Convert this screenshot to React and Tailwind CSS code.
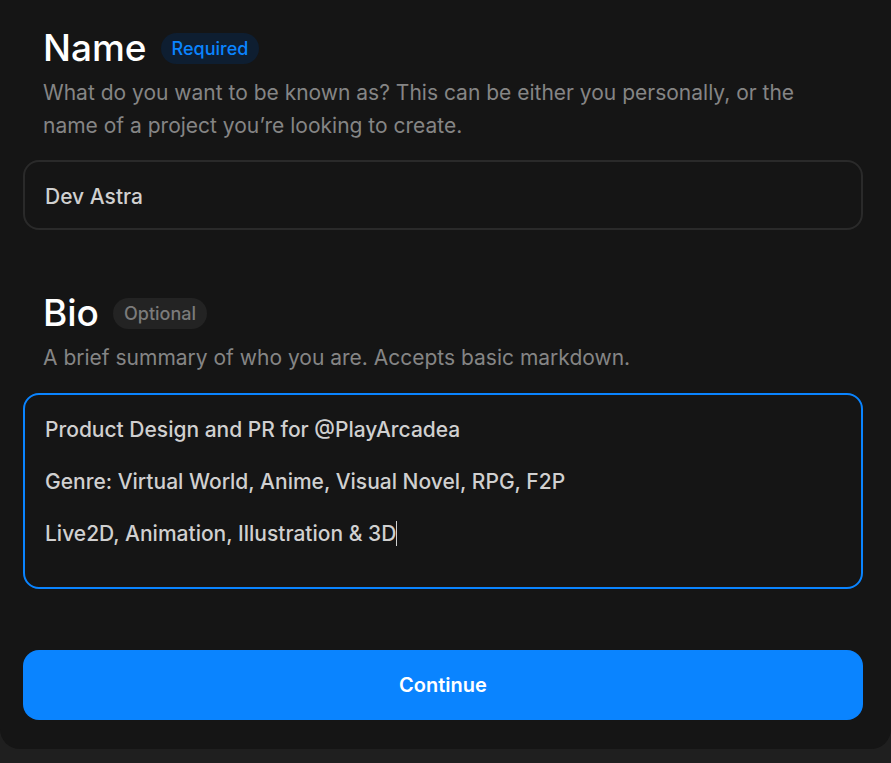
const Badge = ({ children, tone }) => (
  <span
    className={
      tone === 'blue'
        ? 'inline-flex h-[31px] items-center rounded-full bg-[#0e1e31] px-[11px] text-[18px] font-medium text-[#0a84ff]'
        : 'inline-flex h-[31px] items-center rounded-full bg-[#232323] px-[11px] text-[18px] font-medium text-[#7b7b7b]'
    }
  >
    {children}
  </span>
)

const FieldHeader = ({ title, badge, tone, children }) => (
  <div className="px-[20px]">
    <div className="flex h-[48px] items-center gap-[14px]">
      <h2 className="text-[37px] font-medium leading-[48px] text-white">{title}</h2>
      <Badge tone={tone}>{badge}</Badge>
    </div>
    <p className="mt-[4px] text-[21px] leading-[33px] text-[#858585]">{children}</p>
  </div>
)

export default function App() {
  return (
    <div className="min-h-screen bg-[#1f1f1f]" style={{ fontFamily: 'Inter, "Noto Sans", sans-serif' }}>
      <div className="rounded-b-[20px] bg-[#151515] pl-[23px] pr-[28px] pt-[24px] pb-[29px]">
        {/* Name */}
        <FieldHeader title="Name" badge="Required" tone="blue">
          What do you want to be known as? This can be either you personally, or the name of a project
          you’re looking to create.
        </FieldHeader>
        <div className="mt-[18px] flex h-[70px] items-center rounded-[16px] border-2 border-[#2a2a2a] px-[20px] pt-[3px] text-[21px] font-medium text-[#d0d0d0]">
          Dev Astra
        </div>

        {/* Bio */}
        <div className="mt-[59px]">
          <FieldHeader title="Bio" badge="Optional" tone="gray">
            A brief summary of who you are. Accepts basic markdown.
          </FieldHeader>
        </div>
        <div className="mt-[19px] h-[196px] rounded-[16px] border-2 border-[#0a84ff] px-[20px] pt-[22px] text-[21px] font-medium leading-[26px] text-[#d0d0d0]">
          <p>Product Design and PR for @PlayArcadea</p>
          <p className="mt-[26px]">Genre: Virtual World, Anime, Visual Novel, RPG, F2P</p>
          <p className="mt-[26px]">
            Live2D, Animation, Illustration &amp; 3D
            <span className="inline-block h-[25px] w-px bg-[#d0d0d0] align-[-5px]" />
          </p>
        </div>

        <button className="mt-[61px] flex h-[70px] w-full items-center justify-center rounded-[16px] bg-[#0a84ff] text-[20px] font-semibold text-white">
          Continue
        </button>
      </div>
    </div>
  )
}
